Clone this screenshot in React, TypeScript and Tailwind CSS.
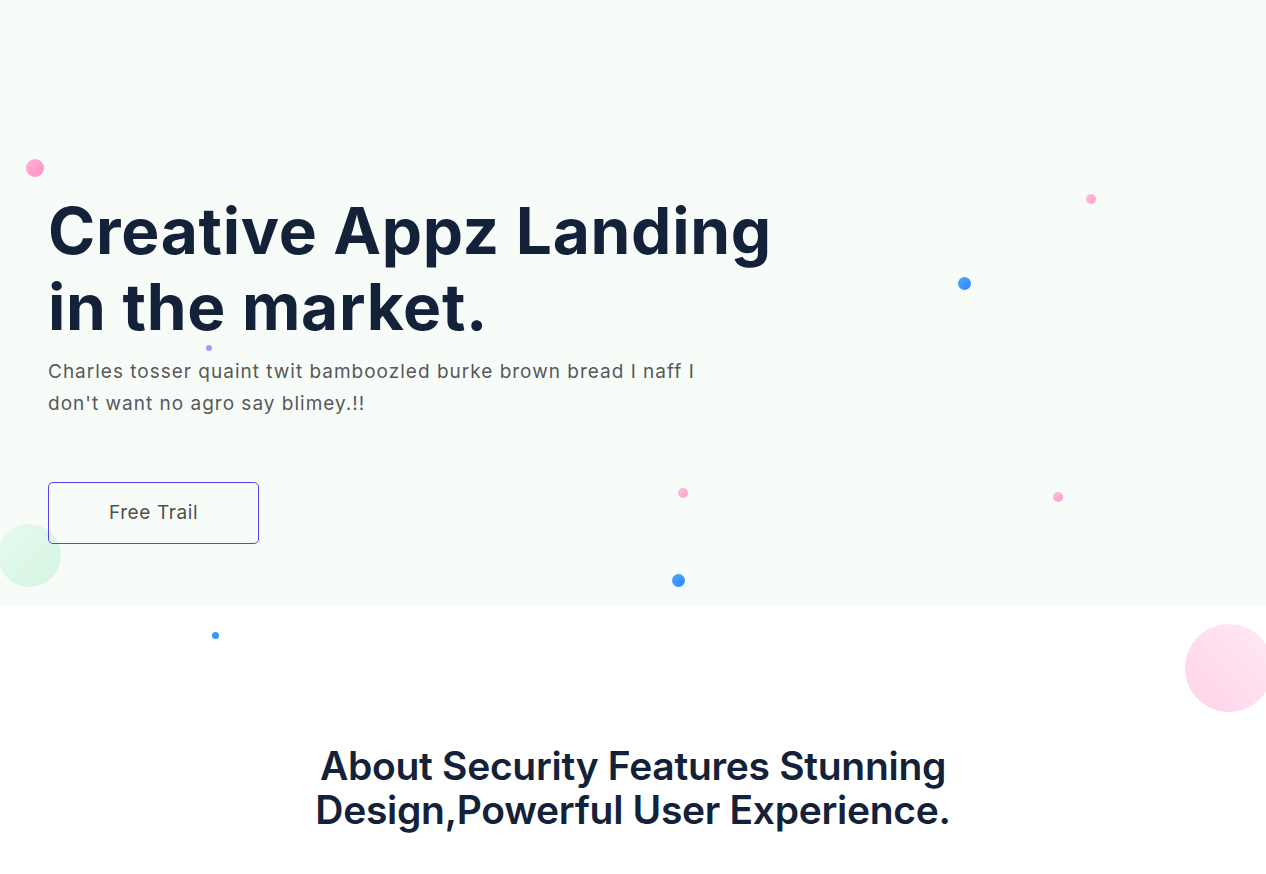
const DOTS = [
  { c: "left-[26px] top-[159px] w-[18px] h-[18px] bg-gradient-to-br from-[#ffb3d6] to-[#ff8fc3]" },
  { c: "left-[206px] top-[345px] w-[6px] h-[6px] bg-[#a49bff]" },
  { c: "left-[1086px] top-[194px] w-[10px] h-[10px] bg-gradient-to-br from-[#ffc0dc] to-[#ff9ccb]" },
  { c: "left-[958px] top-[277px] w-[13px] h-[13px] bg-gradient-to-br from-[#4aa8ff] to-[#2f86ff]" },
  { c: "left-[678px] top-[488px] w-[10px] h-[10px] bg-gradient-to-br from-[#ffc0dc] to-[#ff9ccb]" },
  { c: "left-[1053px] top-[492px] w-[10px] h-[10px] bg-gradient-to-br from-[#ffc0dc] to-[#ff9ccb]" },
  { c: "left-[672px] top-[574px] w-[13px] h-[13px] bg-gradient-to-br from-[#4aa8ff] to-[#2f86ff]" },
  { c: "left-[212px] top-[632px] w-[7px] h-[7px] bg-[#3d95ff]" },
];

export default function App() {
  return (
    <div className="relative min-h-screen overflow-hidden bg-white font-['Inter',sans-serif]">
      {/* Hero */}
      <section className="relative h-[606px] bg-[#f7fcf9] px-12 pt-[193px]">
        {/* soft green blob behind the button */}
        <div className="absolute left-[-2px] top-[524px] h-[63px] w-[63px] rounded-full bg-gradient-to-br from-[#e6faee] to-[#d6f5e2]" />
        <div className="relative">
          <h1 className="text-[64px] font-bold leading-[76px] tracking-[0.7px] text-[#142239]">
            Creative Appz Landing
            <br />
            in the market.
          </h1>
          <p className="mt-[11px] text-[19px] leading-[32px] tracking-[1px] text-[#585858]">
            Charles tosser quaint twit bamboozled burke brown bread I naff I
            <br />
            don't want no agro say blimey.!!
          </p>
          <button className="mt-[62px] flex h-[62px] w-[211px] items-center justify-center rounded-[5px] border border-[#5b3ff2] text-[19px] tracking-[0.6px] text-[#4f4f4f]">
            Free Trail
          </button>
        </div>
      </section>

      {/* About */}
      <section className="pt-[138px] pb-24 text-center">
        <h2 className="text-[39px] font-semibold leading-[44px] tracking-[-0.3px] text-[#142239]">
          About Security Features Stunning
          <br />
          Design,Powerful User Experience.
        </h2>
      </section>

      {/* decorative dots */}
      {DOTS.map((d, i) => (
        <span key={i} className={`absolute rounded-full ${d.c}`} />
      ))}
      <span className="absolute left-[1185px] top-[624px] h-[88px] w-[88px] rounded-full bg-gradient-to-bl from-[#ffeaf5] to-[#ffd2e8]" />
    </div>
  );
}
